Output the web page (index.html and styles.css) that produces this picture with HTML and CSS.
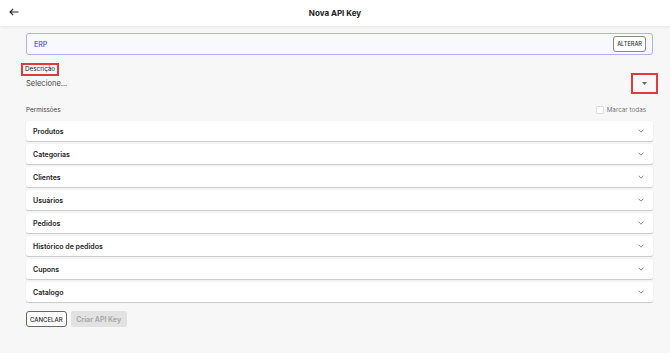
FILE: index.html
```html
<!DOCTYPE html>
<html lang="pt-BR">
<head>
    <meta charset="UTF-8">
    <meta name="viewport" content="width=device-width, initial-scale=1.0">
    <title>Nova API Key</title>
    <link rel="stylesheet" href="styles.css">
</head>
<body>
    <header class="topbar">
        <button class="back" aria-label="Voltar">
            <svg width="10" height="8" viewBox="0 0 10 8"><path d="M9.5 4H1M4.2 0.8L1 4l3.2 3.2" fill="none" stroke="#222" stroke-width="1.1"/></svg>
        </button>
        <h1 class="title">Nova API Key</h1>
    </header>

    <main class="content">
        <div class="integration">
            <span class="integration-name">ERP</span>
            <button class="btn-outline small">ALTERAR</button>
        </div>

        <div class="field">
            <label class="field-label">Descrição</label>
            <div class="select">
                <span class="select-value">Selecione...</span>
                <span class="select-caret"><svg width="5" height="3" viewBox="0 0 5 3"><path d="M0 0h5L2.5 3z" fill="#666"/></svg></span>
            </div>
        </div>

        <div class="perm-head">
            <span class="perm-title">Permissões</span>
            <label class="check-all"><span class="checkbox"></span>Marcar todas</label>
        </div>

        <div class="accordion">
            <div class="acc-item"><span>Produtos</span><svg class="chev" width="6" height="4" viewBox="0 0 6 4"><path d="M0.5 0.7L3 3.2 5.5 0.7" fill="none" stroke="#777" stroke-width="0.9"/></svg></div>
            <div class="acc-item"><span>Categorias</span><svg class="chev" width="6" height="4" viewBox="0 0 6 4"><path d="M0.5 0.7L3 3.2 5.5 0.7" fill="none" stroke="#777" stroke-width="0.9"/></svg></div>
            <div class="acc-item"><span>Clientes</span><svg class="chev" width="6" height="4" viewBox="0 0 6 4"><path d="M0.5 0.7L3 3.2 5.5 0.7" fill="none" stroke="#777" stroke-width="0.9"/></svg></div>
            <div class="acc-item"><span>Usuários</span><svg class="chev" width="6" height="4" viewBox="0 0 6 4"><path d="M0.5 0.7L3 3.2 5.5 0.7" fill="none" stroke="#777" stroke-width="0.9"/></svg></div>
            <div class="acc-item"><span>Pedidos</span><svg class="chev" width="6" height="4" viewBox="0 0 6 4"><path d="M0.5 0.7L3 3.2 5.5 0.7" fill="none" stroke="#777" stroke-width="0.9"/></svg></div>
            <div class="acc-item"><span>Histórico de pedidos</span><svg class="chev" width="6" height="4" viewBox="0 0 6 4"><path d="M0.5 0.7L3 3.2 5.5 0.7" fill="none" stroke="#777" stroke-width="0.9"/></svg></div>
            <div class="acc-item"><span>Cupons</span><svg class="chev" width="6" height="4" viewBox="0 0 6 4"><path d="M0.5 0.7L3 3.2 5.5 0.7" fill="none" stroke="#777" stroke-width="0.9"/></svg></div>
            <div class="acc-item"><span>Catalogo</span><svg class="chev" width="6" height="4" viewBox="0 0 6 4"><path d="M0.5 0.7L3 3.2 5.5 0.7" fill="none" stroke="#777" stroke-width="0.9"/></svg></div>
        </div>

        <div class="actions">
            <button class="btn-outline">CANCELAR</button>
            <button class="btn-disabled" disabled>Criar API Key</button>
        </div>
    </main>
</body>
</html>
```

FILE: styles.css
```css
* { box-sizing: border-box; margin: 0; padding: 0; }
body { font-family: Inter, "Noto Sans", Arial, sans-serif; background: #f7f7f7; color: #222; width: 670px; height: 353px; overflow: hidden; }
button { font-family: inherit; }

.topbar { height: 26px; background: #fff; box-shadow: 0 1px 3px rgba(0, 0, 0, 0.07); display: flex; align-items: center; justify-content: center; position: relative; }
.back { position: absolute; left: 9px; top: 8px; border: none; background: none; display: flex; }
.title { font-size: 8px; font-weight: 700; color: #222; }

.content { margin: 7px 17px 0 26px; }

.integration { height: 22px; border: 1px solid #b0b0f2; border-radius: 3px; background: #f8f8ff; display: flex; align-items: center; justify-content: space-between; padding: 0 6px 0 7px; }
.integration-name { font-size: 7px; font-weight: 600; color: #6a6ad8; }

.btn-outline { background: #fff; border: 1px solid #666; border-radius: 3px; font-size: 6px; font-weight: 500; color: #222; padding: 0 3px; height: 16px; }
.btn-outline.small { color: #333; border-color: #888; height: 16px; padding: 0 3px; font-size: 5.6px; }

.field { margin-top: 9px; display: flex; flex-direction: column; align-items: flex-start; }
.field-label { font-size: 6.3px; color: #222; padding: 1px 3px; margin-left: -4px; outline: 2px solid #e03a3a; outline-offset: -1px; height: 11px; line-height: 9px; }
.select { align-self: stretch; display: flex; align-items: center; justify-content: space-between; margin-top: -1px; }
.select-value { font-size: 7.5px; color: #444; }
.select-caret { width: 25px; height: 19px; margin-right: -4px; outline: 2px solid #e03a3a; outline-offset: -1px; display: flex; align-items: center; justify-content: center; }

.perm-head { display: flex; justify-content: space-between; align-items: center; margin-top: 13px; padding-right: 7px; height: 8px; }
.perm-title { font-size: 6.3px; color: #444; }
.check-all { display: flex; align-items: center; gap: 3px; font-size: 6.3px; color: #777; }
.checkbox { width: 8px; height: 8px; border: 1px solid #ddd; border-radius: 1px; background: #fff; }

.accordion { display: flex; flex-direction: column; gap: 3px; margin-top: 7px; }
.acc-item { height: 20px; background: #fff; border-radius: 2px; box-shadow: 0 1px 1px rgba(0, 0, 0, 0.18), 0 0 1px rgba(0, 0, 0, 0.08); display: flex; align-items: center; justify-content: space-between; padding: 0 9px 0 7px; font-size: 7px; font-weight: 600; color: #222; }

.actions { display: flex; gap: 4px; margin-top: 9px; }
.btn-disabled { background: #e2e2e2; border: none; border-radius: 2px; color: #aaa; font-size: 7px; font-weight: 700; height: 16px; width: 56px; }
```
